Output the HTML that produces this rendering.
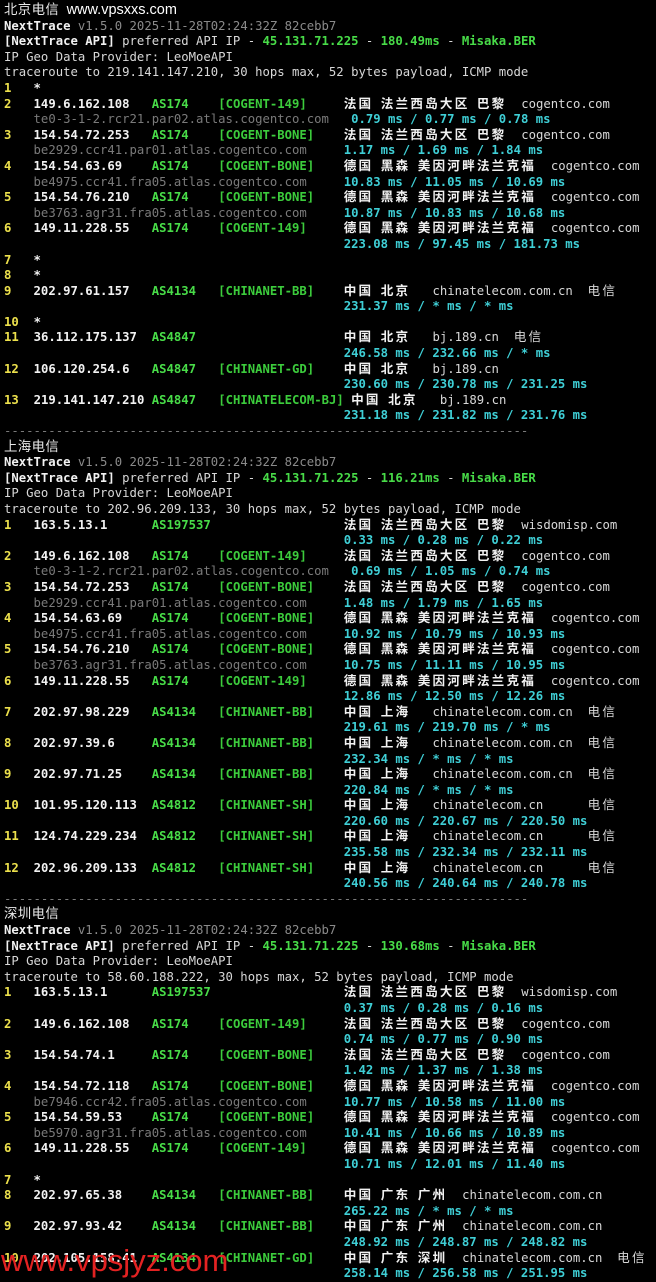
<!DOCTYPE html>
<html><head><meta charset="utf-8"><style>
html,body{margin:0;padding:0;background:#000;}
body{width:656px;height:1280px;overflow:hidden;position:relative;}
pre{margin:0;position:absolute;left:4px;top:3px;font-family:"DejaVu Sans Mono","Liberation Mono",monospace;font-size:12.28px;line-height:15.6px;color:#d8d8d8;white-space:pre;}
pre span,pre b{line-height:0;}
b{color:#f2f2f2;font-weight:bold;}
.y{color:#ece04c;font-weight:bold;}
.g{color:#48dc48;font-weight:bold;}
.gb{color:#3ccc3c;font-weight:bold;}
.gr{color:#7a7a7a;}
.v{color:#8a8a8a;}
.c{color:#3fcfd6;font-weight:bold;}
.k{font-family:"Noto Sans CJK SC","WenQuanYi Zen Hei",sans-serif;font-size:12.6px;letter-spacing:2.2px;color:#f2f2f2;font-weight:bold;}
.kn{font-family:"Noto Sans CJK SC","WenQuanYi Zen Hei",sans-serif;font-size:12.6px;letter-spacing:2.2px;color:#d8d8d8;}
.h{font-family:"Noto Sans CJK SC","WenQuanYi Zen Hei",sans-serif;font-size:13.4px;letter-spacing:0.4px;color:#e8e8e8;}
.hs{font-family:"Liberation Sans",sans-serif;font-size:14.5px;color:#fff;}
.wm{position:absolute;left:1px;top:1243px;font-family:"Liberation Sans",sans-serif;font-size:31px;color:#e32222;line-height:36px;}
</style></head><body>
<pre><span class="h">北京电信</span> <span class="hs">www.vpsxxs.com</span>
<b>NextTrace</b> <span class="v">v1.5.0 2025-11-28T02:24:32Z 82cebb7</span>
<b>[NextTrace API]</b> preferred API IP - <span class="g">45.131.71.225</span> - <span class="g">180.49ms</span> - <span class="g">Misaka.BER</span>
IP Geo Data Provider: LeoMoeAPI
traceroute to 219.141.147.210, 30 hops max, 52 bytes payload, ICMP mode
<span class="y">1</span>   <b>*</b>
<span class="y">2</span>   <b>149.6.162.108</b>   <span class="g">AS174</span>    <span class="gb">[COGENT-149]</span>     <span class="k">法国</span> <span class="k">法兰西岛大区</span> <span class="k">巴黎</span>  cogentco.com
    <span class="gr">te0-3-1-2.rcr21.par02.atlas.cogentco.com</span>   <span class="c">0.79 ms / 0.77 ms / 0.78 ms</span>
<span class="y">3</span>   <b>154.54.72.253</b>   <span class="g">AS174</span>    <span class="gb">[COGENT-BONE]</span>    <span class="k">法国</span> <span class="k">法兰西岛大区</span> <span class="k">巴黎</span>  cogentco.com
    <span class="gr">be2929.ccr41.par01.atlas.cogentco.com</span>     <span class="c">1.17 ms / 1.69 ms / 1.84 ms</span>
<span class="y">4</span>   <b>154.54.63.69</b>    <span class="g">AS174</span>    <span class="gb">[COGENT-BONE]</span>    <span class="k">德国</span> <span class="k">黑森</span> <span class="k">美因河畔法兰克福</span>  cogentco.com
    <span class="gr">be4975.ccr41.fra05.atlas.cogentco.com</span>     <span class="c">10.83 ms / 11.05 ms / 10.69 ms</span>
<span class="y">5</span>   <b>154.54.76.210</b>   <span class="g">AS174</span>    <span class="gb">[COGENT-BONE]</span>    <span class="k">德国</span> <span class="k">黑森</span> <span class="k">美因河畔法兰克福</span>  cogentco.com
    <span class="gr">be3763.agr31.fra05.atlas.cogentco.com</span>     <span class="c">10.87 ms / 10.83 ms / 10.68 ms</span>
<span class="y">6</span>   <b>149.11.228.55</b>   <span class="g">AS174</span>    <span class="gb">[COGENT-149]</span>     <span class="k">德国</span> <span class="k">黑森</span> <span class="k">美因河畔法兰克福</span>  cogentco.com
                                              <span class="c">223.08 ms / 97.45 ms / 181.73 ms</span>
<span class="y">7</span>   <b>*</b>
<span class="y">8</span>   <b>*</b>
<span class="y">9</span>   <b>202.97.61.157</b>   <span class="g">AS4134</span>   <span class="gb">[CHINANET-BB]</span>    <span class="k">中国</span> <span class="k">北京</span>   chinatelecom.com.cn  <span class="kn">电信</span>
                                              <span class="c">231.37 ms / * ms / * ms</span>
<span class="y">10</span>  <b>*</b>
<span class="y">11</span>  <b>36.112.175.137</b>  <span class="g">AS4847</span>                    <span class="k">中国</span> <span class="k">北京</span>   bj.189.cn  <span class="kn">电信</span>
                                              <span class="c">246.58 ms / 232.66 ms / * ms</span>
<span class="y">12</span>  <b>106.120.254.6</b>   <span class="g">AS4847</span>   <span class="gb">[CHINANET-GD]</span>    <span class="k">中国</span> <span class="k">北京</span>   bj.189.cn
                                              <span class="c">230.60 ms / 230.78 ms / 231.25 ms</span>
<span class="y">13</span>  <b>219.141.147.210</b> <span class="g">AS4847</span>   <span class="gb">[CHINATELECOM-BJ]</span> <span class="k">中国</span> <span class="k">北京</span>   bj.189.cn
                                              <span class="c">231.18 ms / 231.82 ms / 231.76 ms</span>
<span class="gr">-----------------------------------------------------------------------</span>
<span class="h">上海电信</span>
<b>NextTrace</b> <span class="v">v1.5.0 2025-11-28T02:24:32Z 82cebb7</span>
<b>[NextTrace API]</b> preferred API IP - <span class="g">45.131.71.225</span> - <span class="g">116.21ms</span> - <span class="g">Misaka.BER</span>
IP Geo Data Provider: LeoMoeAPI
traceroute to 202.96.209.133, 30 hops max, 52 bytes payload, ICMP mode
<span class="y">1</span>   <b>163.5.13.1</b>      <span class="g">AS197537</span>                  <span class="k">法国</span> <span class="k">法兰西岛大区</span> <span class="k">巴黎</span>  wisdomisp.com
                                              <span class="c">0.33 ms / 0.28 ms / 0.22 ms</span>
<span class="y">2</span>   <b>149.6.162.108</b>   <span class="g">AS174</span>    <span class="gb">[COGENT-149]</span>     <span class="k">法国</span> <span class="k">法兰西岛大区</span> <span class="k">巴黎</span>  cogentco.com
    <span class="gr">te0-3-1-2.rcr21.par02.atlas.cogentco.com</span>   <span class="c">0.69 ms / 1.05 ms / 0.74 ms</span>
<span class="y">3</span>   <b>154.54.72.253</b>   <span class="g">AS174</span>    <span class="gb">[COGENT-BONE]</span>    <span class="k">法国</span> <span class="k">法兰西岛大区</span> <span class="k">巴黎</span>  cogentco.com
    <span class="gr">be2929.ccr41.par01.atlas.cogentco.com</span>     <span class="c">1.48 ms / 1.79 ms / 1.65 ms</span>
<span class="y">4</span>   <b>154.54.63.69</b>    <span class="g">AS174</span>    <span class="gb">[COGENT-BONE]</span>    <span class="k">德国</span> <span class="k">黑森</span> <span class="k">美因河畔法兰克福</span>  cogentco.com
    <span class="gr">be4975.ccr41.fra05.atlas.cogentco.com</span>     <span class="c">10.92 ms / 10.79 ms / 10.93 ms</span>
<span class="y">5</span>   <b>154.54.76.210</b>   <span class="g">AS174</span>    <span class="gb">[COGENT-BONE]</span>    <span class="k">德国</span> <span class="k">黑森</span> <span class="k">美因河畔法兰克福</span>  cogentco.com
    <span class="gr">be3763.agr31.fra05.atlas.cogentco.com</span>     <span class="c">10.75 ms / 11.11 ms / 10.95 ms</span>
<span class="y">6</span>   <b>149.11.228.55</b>   <span class="g">AS174</span>    <span class="gb">[COGENT-149]</span>     <span class="k">德国</span> <span class="k">黑森</span> <span class="k">美因河畔法兰克福</span>  cogentco.com
                                              <span class="c">12.86 ms / 12.50 ms / 12.26 ms</span>
<span class="y">7</span>   <b>202.97.98.229</b>   <span class="g">AS4134</span>   <span class="gb">[CHINANET-BB]</span>    <span class="k">中国</span> <span class="k">上海</span>   chinatelecom.com.cn  <span class="kn">电信</span>
                                              <span class="c">219.61 ms / 219.70 ms / * ms</span>
<span class="y">8</span>   <b>202.97.39.6</b>     <span class="g">AS4134</span>   <span class="gb">[CHINANET-BB]</span>    <span class="k">中国</span> <span class="k">上海</span>   chinatelecom.com.cn  <span class="kn">电信</span>
                                              <span class="c">232.34 ms / * ms / * ms</span>
<span class="y">9</span>   <b>202.97.71.25</b>    <span class="g">AS4134</span>   <span class="gb">[CHINANET-BB]</span>    <span class="k">中国</span> <span class="k">上海</span>   chinatelecom.com.cn  <span class="kn">电信</span>
                                              <span class="c">220.84 ms / * ms / * ms</span>
<span class="y">10</span>  <b>101.95.120.113</b>  <span class="g">AS4812</span>   <span class="gb">[CHINANET-SH]</span>    <span class="k">中国</span> <span class="k">上海</span>   chinatelecom.cn      <span class="kn">电信</span>
                                              <span class="c">220.60 ms / 220.67 ms / 220.50 ms</span>
<span class="y">11</span>  <b>124.74.229.234</b>  <span class="g">AS4812</span>   <span class="gb">[CHINANET-SH]</span>    <span class="k">中国</span> <span class="k">上海</span>   chinatelecom.cn      <span class="kn">电信</span>
                                              <span class="c">235.58 ms / 232.34 ms / 232.11 ms</span>
<span class="y">12</span>  <b>202.96.209.133</b>  <span class="g">AS4812</span>   <span class="gb">[CHINANET-SH]</span>    <span class="k">中国</span> <span class="k">上海</span>   chinatelecom.cn      <span class="kn">电信</span>
                                              <span class="c">240.56 ms / 240.64 ms / 240.78 ms</span>
<span class="gr">-----------------------------------------------------------------------</span>
<span class="h">深圳电信</span>
<b>NextTrace</b> <span class="v">v1.5.0 2025-11-28T02:24:32Z 82cebb7</span>
<b>[NextTrace API]</b> preferred API IP - <span class="g">45.131.71.225</span> - <span class="g">130.68ms</span> - <span class="g">Misaka.BER</span>
IP Geo Data Provider: LeoMoeAPI
traceroute to 58.60.188.222, 30 hops max, 52 bytes payload, ICMP mode
<span class="y">1</span>   <b>163.5.13.1</b>      <span class="g">AS197537</span>                  <span class="k">法国</span> <span class="k">法兰西岛大区</span> <span class="k">巴黎</span>  wisdomisp.com
                                              <span class="c">0.37 ms / 0.28 ms / 0.16 ms</span>
<span class="y">2</span>   <b>149.6.162.108</b>   <span class="g">AS174</span>    <span class="gb">[COGENT-149]</span>     <span class="k">法国</span> <span class="k">法兰西岛大区</span> <span class="k">巴黎</span>  cogentco.com
                                              <span class="c">0.74 ms / 0.77 ms / 0.90 ms</span>
<span class="y">3</span>   <b>154.54.74.1</b>     <span class="g">AS174</span>    <span class="gb">[COGENT-BONE]</span>    <span class="k">法国</span> <span class="k">法兰西岛大区</span> <span class="k">巴黎</span>  cogentco.com
                                              <span class="c">1.42 ms / 1.37 ms / 1.38 ms</span>
<span class="y">4</span>   <b>154.54.72.118</b>   <span class="g">AS174</span>    <span class="gb">[COGENT-BONE]</span>    <span class="k">德国</span> <span class="k">黑森</span> <span class="k">美因河畔法兰克福</span>  cogentco.com
    <span class="gr">be7946.ccr42.fra05.atlas.cogentco.com</span>     <span class="c">10.77 ms / 10.58 ms / 11.00 ms</span>
<span class="y">5</span>   <b>154.54.59.53</b>    <span class="g">AS174</span>    <span class="gb">[COGENT-BONE]</span>    <span class="k">德国</span> <span class="k">黑森</span> <span class="k">美因河畔法兰克福</span>  cogentco.com
    <span class="gr">be5970.agr31.fra05.atlas.cogentco.com</span>     <span class="c">10.41 ms / 10.66 ms / 10.89 ms</span>
<span class="y">6</span>   <b>149.11.228.55</b>   <span class="g">AS174</span>    <span class="gb">[COGENT-149]</span>     <span class="k">德国</span> <span class="k">黑森</span> <span class="k">美因河畔法兰克福</span>  cogentco.com
                                              <span class="c">10.71 ms / 12.01 ms / 11.40 ms</span>
<span class="y">7</span>   <b>*</b>
<span class="y">8</span>   <b>202.97.65.38</b>    <span class="g">AS4134</span>   <span class="gb">[CHINANET-BB]</span>    <span class="k">中国</span> <span class="k">广东</span> <span class="k">广州</span>  chinatelecom.com.cn
                                              <span class="c">265.22 ms / * ms / * ms</span>
<span class="y">9</span>   <b>202.97.93.42</b>    <span class="g">AS4134</span>   <span class="gb">[CHINANET-BB]</span>    <span class="k">中国</span> <span class="k">广东</span> <span class="k">广州</span>  chinatelecom.com.cn
                                              <span class="c">248.92 ms / 248.87 ms / 248.82 ms</span>
<span class="y">10</span>  <b>202.105.158.41</b>  <span class="g">AS4134</span>   <span class="gb">[CHINANET-GD]</span>    <span class="k">中国</span> <span class="k">广东</span> <span class="k">深圳</span>  chinatelecom.com.cn  <span class="kn">电信</span>
                                              <span class="c">258.14 ms / 256.58 ms / 251.95 ms</span></pre>
<div class="wm">www.vpsjyz.com</div>
</body></html>
